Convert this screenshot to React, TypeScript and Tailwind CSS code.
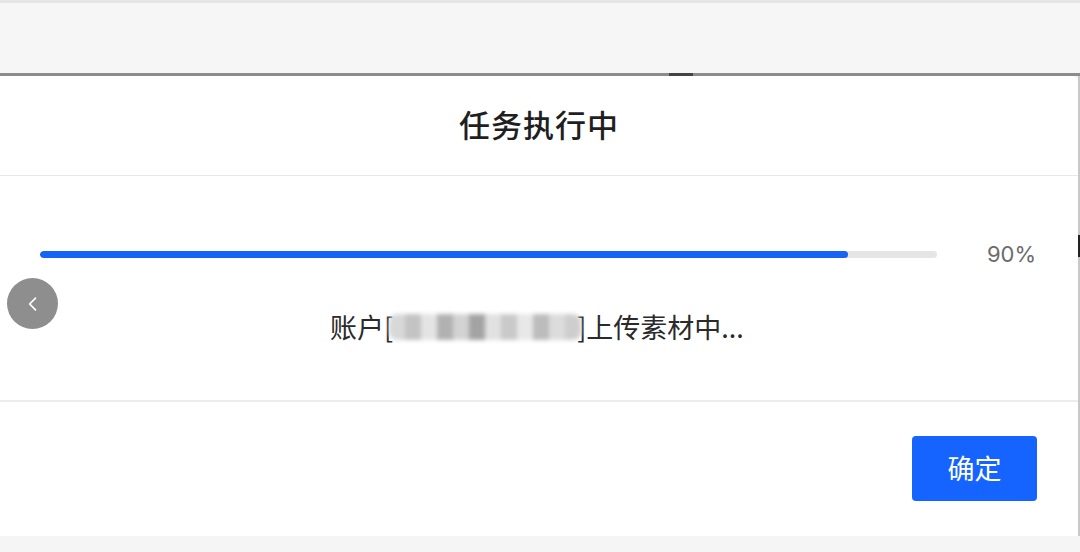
import React from 'react';

const cjk = { fontFamily: '"Noto Sans CJK SC", "Noto Sans", sans-serif' };

// mosaic blocks standing in for the masked account name
const mosaic = ['#d4d4d4', '#bdbdbd', '#e2e2e2', '#a9a9a9', '#cfcfcf', '#9a9a9a', '#dedede', '#c4c4c4', '#e6e6e6', '#b5b5b5', '#d9d9d9', '#c9c9c9'];

const App = () => {
  return (
    <div className="w-[1080px] h-[552px] bg-[#f5f5f5] flex flex-col overflow-hidden relative" style={cjk}>
      <div className="h-[3px] bg-[#e6e6e6]" />
      <div className="h-[70px] bg-[#f6f6f6]" />
      <div className="h-[3px] bg-[#8c8c8c] flex">
        <div className="w-[669px]" />
        <div className="w-[24px] bg-[#444]" />
      </div>

      <div className="flex h-[460px]">
        <div className="flex-1 bg-white rounded-tr-[6px] flex flex-col">
          {/* header */}
          <div className="h-[100px] border-b border-[#e8e8e8] flex items-center justify-center">
            <h2 className="text-[31px] font-medium text-[#1f1f1f] tracking-[1px] -mt-[3px]">任务执行中</h2>
          </div>

          {/* body */}
          <div className="h-[226px] border-b-2 border-[#ececec] flex flex-col">
            <div className="flex items-center mt-[62px] pl-[40px] pr-[42px]">
              <div className="w-[897px] h-[7px] bg-[#e5e5e5] rounded-full overflow-hidden">
                <div className="h-full w-[808px] bg-[#1663f5] rounded-full" />
              </div>
              <span className="ml-auto text-[22px] text-[#6b6b6b]" style={{ fontFamily: 'Inter, "Noto Sans", sans-serif' }}>90%</span>
            </div>
            <div className="flex items-center justify-center mt-[36px] pr-[4px] text-[27px] text-[#2a2a2a]">
              <span>账户[</span>
              <span className="flex h-[26px] w-[192px] -ml-[4px] rounded-[8px] overflow-hidden blur-[2px] opacity-90">
                {mosaic.map((c, i) => (
                  <span key={i} className="flex-1 h-full" style={{ backgroundColor: c }} />
                ))}
              </span>
              <span className="-ml-[4px]">]上传素材中...</span>
            </div>
          </div>

          {/* footer */}
          <div className="flex-1 flex items-start justify-end pt-[34px] pr-[41px]">
            <button className="w-[125px] h-[65px] bg-[#1664ff] rounded-[4px] text-white text-[27px]">确定</button>
          </div>
        </div>
        <div className="w-[2px] bg-[#c8c8c8] flex flex-col">
          <div className="h-[159px]" />
          <div className="h-[22px] bg-[#222]" />
        </div>
      </div>

      <div className="flex-1 bg-[#f5f5f5]" />

      {/* floating back button */}
      <div className="absolute left-[7px] top-[278px] w-[51px] h-[51px] rounded-full bg-[#8e8e8e] flex items-center justify-center">
        <svg width="20" height="20" viewBox="0 0 24 24" fill="none" stroke="white" strokeWidth="2" strokeLinecap="round" strokeLinejoin="round">
          <path d="M15 5l-7 7 7 7" />
        </svg>
      </div>
    </div>
  );
};

export default App;
